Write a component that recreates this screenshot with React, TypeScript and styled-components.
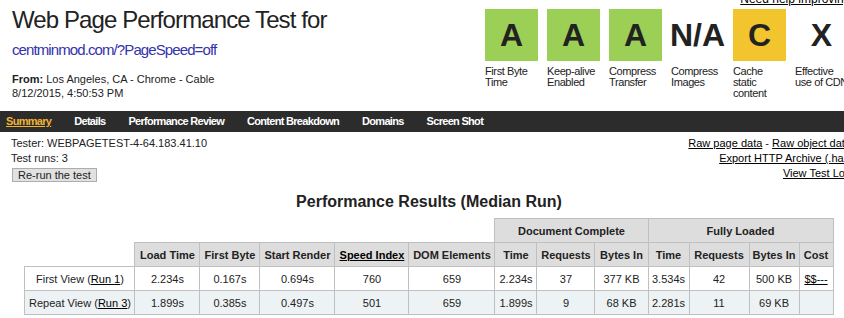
import React from "react";
import styled, { createGlobalStyle } from "styled-components";

const GlobalStyle = createGlobalStyle`
  html, body {
    margin: 0;
    padding: 0;
    overflow: hidden;
    background: #fff;
  }
  body {
    font-family: "Liberation Sans", Arial, sans-serif;
    font-size: 11px;
    color: #222;
  }
`;

const Page = styled.div`
  width: 858px;
`;

const Header = styled.header`
  display: flex;
  justify-content: space-between;
  height: 111px;
  padding-right: 1px;
`;

const Intro = styled.div`
  padding: 5px 0 0 12px;
`;

const Title = styled.h1`
  margin: 0;
  font-size: 24px;
  line-height: 29px;
  font-weight: normal;
  letter-spacing: -0.9px;
  color: #222;
`;

const TestedUrl = styled.a`
  display: block;
  margin-top: 7px;
  font-size: 15px;
  line-height: 18px;
  letter-spacing: -0.9px;
  color: #3333aa;
  text-decoration: none;
`;

const Meta = styled.div`
  margin-top: 13px;
  font-size: 11px;
  line-height: 14px;
`;

const Scores = styled.div`
  display: flex;
  flex-direction: column;
  align-items: flex-end;
`;

const HelpLink = styled.a`
  margin-top: -8px;
  font-size: 12px;
  line-height: 14px;
  color: #000;
  text-decoration: underline;
`;

const GradeRow = styled.div`
  display: flex;
  margin-top: 3px;
`;

const Grade = styled.div`
  width: 62px;
`;

const tones: Record<string, string> = {
  good: "#9ccf56",
  fair: "#f2c42e",
  none: "transparent",
};

const GradeBox = styled.div<{ $tone: string }>`
  width: 53px;
  height: 52px;
  display: flex;
  align-items: center;
  justify-content: center;
  background: ${(p) => tones[p.$tone]};
  font-size: 32px;
  font-weight: bold;
  color: #222;
`;

const GradeLabel = styled.div`
  width: 54px;
  margin-top: 5px;
  font-size: 11px;
  line-height: 11px;
  letter-spacing: -0.4px;
`;

const NavBar = styled.nav`
  display: flex;
  gap: 23px;
  height: 21px;
  padding-left: 6px;
  background: #2c2c2c;
`;

const NavItem = styled.a<{ $active?: boolean }>`
  font-size: 11px;
  font-weight: bold;
  line-height: 21px;
  letter-spacing: -0.7px;
  color: ${(p) => (p.$active ? "#f2b233" : "#fff")};
  text-decoration: ${(p) => (p.$active ? "underline" : "none")};
`;

const InfoRow = styled.div`
  display: flex;
  justify-content: space-between;
  padding: 4px 7px 0 11px;
`;

const TestInfo = styled.div`
  font-size: 11px;
  line-height: 15px;
`;

const RerunButton = styled.button`
  display: block;
  margin: 2px 0 0 1px;
  height: 14px;
  padding: 0 5px;
  font-family: "Liberation Sans", Arial, sans-serif;
  font-size: 11px;
  line-height: 12px;
  color: #222;
  background: #e1e1e1;
  border: 1px solid #adadad;
  border-radius: 0;
`;

const DataLinks = styled.div`
  text-align: right;
  font-size: 11px;
  line-height: 15px;
`;

const PlainLink = styled.a`
  color: #000;
  text-decoration: underline;
`;

const SectionTitle = styled.h2`
  margin: 10px 0 7px;
  font-size: 16px;
  line-height: 19px;
  font-weight: bold;
  text-align: center;
  color: #222;
`;

const Results = styled.table`
  width: 808px;
  margin: 0 auto;
  border-collapse: collapse;
  table-layout: fixed;
  font-size: 11px;
  color: #222;
`;

const Col = styled.col<{ $w: number }>`
  width: ${(p) => p.$w}px;
`;

const Blank = styled.td`
  border: none;
  padding: 0;
  height: 23px;
`;

const HeadCell = styled.th`
  height: 23px;
  padding: 0 2px;
  background: #dddddd;
  border: 1px solid #c0c0c0;
  font-weight: bold;
  text-align: center;
  white-space: nowrap;
  overflow: hidden;
`;

const Row = styled.tr<{ $alt?: boolean }>`
  background: ${(p) => (p.$alt ? "#edf2f4" : "#fff")};
`;

const Cell = styled.td`
  height: 23px;
  padding: 0 2px;
  border: 1px solid #c0c0c0;
  text-align: center;
  white-space: nowrap;
`;

const grades = [
  { letter: "A", tone: "good", label: "First Byte Time" },
  { letter: "A", tone: "good", label: "Keep-alive Enabled" },
  { letter: "A", tone: "good", label: "Compress Transfer" },
  { letter: "N/A", tone: "none", label: "Compress Images" },
  { letter: "C", tone: "fair", label: "Cache static content" },
  { letter: "X", tone: "none", label: "Effective use of CDN" },
];

const tabs = [
  "Summary",
  "Details",
  "Performance Review",
  "Content Breakdown",
  "Domains",
  "Screen Shot",
];

const widths = [110, 65, 60, 75, 74, 86, 42, 58, 53, 41, 60, 50, 34];

const runs = [
  {
    view: "First View",
    run: 1,
    values: ["2.234s", "0.167s", "0.694s", "760", "659", "2.234s", "37", "377 KB", "3.534s", "42", "500 KB"],
    cost: true,
  },
  {
    view: "Repeat View",
    run: 3,
    values: ["1.899s", "0.385s", "0.497s", "501", "659", "1.899s", "9", "68 KB", "2.281s", "11", "69 KB"],
    cost: false,
  },
];

function App() {
  return (
    <Page>
      <GlobalStyle />
      <Header>
        <Intro>
          <Title>Web Page Performance Test for</Title>
          <TestedUrl href="#">centminmod.com/?PageSpeed=off</TestedUrl>
          <Meta>
            <b>From:</b> Los Angeles, CA - Chrome - Cable
            <br />
            8/12/2015, 4:50:53 PM
          </Meta>
        </Intro>
        <Scores>
          <HelpLink href="#">Need help improving?</HelpLink>
          <GradeRow>
            {grades.map((g, i) => (
              <Grade key={i}>
                <GradeBox $tone={g.tone}>{g.letter}</GradeBox>
                <GradeLabel>{g.label}</GradeLabel>
              </Grade>
            ))}
          </GradeRow>
        </Scores>
      </Header>

      <NavBar>
        {tabs.map((t, i) => (
          <NavItem key={t} href="#" $active={i === 0}>
            {t}
          </NavItem>
        ))}
      </NavBar>

      <InfoRow>
        <TestInfo>
          Tester: WEBPAGETEST-4-64.183.41.10
          <br />
          Test runs: 3
          <RerunButton>Re-run the test</RerunButton>
        </TestInfo>
        <DataLinks>
          <PlainLink href="#">Raw page data</PlainLink> -{" "}
          <PlainLink href="#">Raw object data</PlainLink>
          <br />
          <PlainLink href="#">Export HTTP Archive (.har)</PlainLink>
          <br />
          <PlainLink href="#">View Test Log</PlainLink>
        </DataLinks>
      </InfoRow>

      <SectionTitle>Performance Results (Median Run)</SectionTitle>

      <Results>
        <colgroup>
          {widths.map((w, i) => (
            <Col key={i} $w={w} />
          ))}
        </colgroup>
        <thead>
          <tr>
            <Blank colSpan={6} />
            <HeadCell colSpan={3}>Document Complete</HeadCell>
            <HeadCell colSpan={4}>Fully Loaded</HeadCell>
          </tr>
          <tr>
            <Blank />
            <HeadCell>Load Time</HeadCell>
            <HeadCell>First Byte</HeadCell>
            <HeadCell>Start Render</HeadCell>
            <HeadCell>
              <PlainLink href="#">Speed Index</PlainLink>
            </HeadCell>
            <HeadCell>DOM Elements</HeadCell>
            <HeadCell>Time</HeadCell>
            <HeadCell>Requests</HeadCell>
            <HeadCell>Bytes In</HeadCell>
            <HeadCell>Time</HeadCell>
            <HeadCell>Requests</HeadCell>
            <HeadCell>Bytes In</HeadCell>
            <HeadCell>Cost</HeadCell>
          </tr>
        </thead>
        <tbody>
          {runs.map((r, i) => (
            <Row key={r.view} $alt={i === 1}>
              <Cell>
                {r.view} (<PlainLink href="#">Run {r.run}</PlainLink>)
              </Cell>
              {r.values.map((v, j) => (
                <Cell key={j}>{v}</Cell>
              ))}
              <Cell>{r.cost && <PlainLink href="#">$$---</PlainLink>}</Cell>
            </Row>
          ))}
        </tbody>
      </Results>
    </Page>
  );
}

export default App;
